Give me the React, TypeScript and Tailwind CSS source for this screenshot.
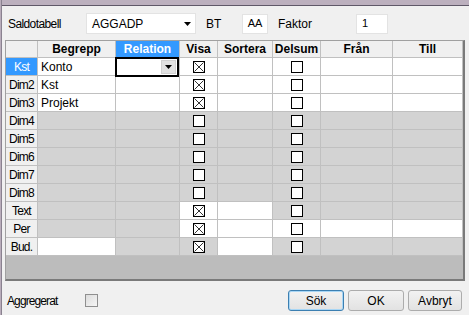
import React from "react";

type Cell = { bg: "w" | "g"; text?: string; check?: "x" | "o"; editor?: boolean };

const W: Cell = { bg: "w" };
const G: Cell = { bg: "g" };
const XW: Cell = { bg: "w", check: "x" };
const XG: Cell = { bg: "g", check: "x" };
const OW: Cell = { bg: "w", check: "o" };
const OG: Cell = { bg: "g", check: "o" };

const rows: { head: string; sel?: boolean; cells: Cell[] }[] = [
  { head: "Kst", sel: true, cells: [{ bg: "w", text: "Konto" }, { bg: "w", editor: true }, XW, W, OW, W, W] },
  { head: "Dim2", cells: [{ bg: "w", text: "Kst" }, W, XW, W, OW, W, W] },
  { head: "Dim3", cells: [{ bg: "w", text: "Projekt" }, W, XW, W, OW, W, W] },
  { head: "Dim4", cells: [G, G, OG, G, OG, G, G] },
  { head: "Dim5", cells: [G, G, OG, G, OG, G, G] },
  { head: "Dim6", cells: [G, G, OG, G, OG, G, G] },
  { head: "Dim7", cells: [G, G, OG, G, OG, G, G] },
  { head: "Dim8", cells: [G, G, OG, G, OG, G, G] },
  { head: "Text", cells: [G, G, XW, W, OG, G, G] },
  { head: "Per", cells: [G, G, XW, W, OW, W, W] },
  { head: "Bud.", cells: [W, G, XG, W, OG, G, G] },
];

const headers = ["Begrepp", "Relation", "Visa", "Sortera", "Delsum", "Från", "Till"];
const widths = ["w-[78px]", "w-[64px]", "w-[38px]", "w-[55px]", "w-[48px]", "w-[72px]", "w-[70px]"];

function Box({ checked }: { checked: boolean }) {
  return (
    <svg width="12" height="12" viewBox="0 0 12 12" className="block">
      <rect x="0.5" y="0.5" width="11" height="11" fill="#ffffff" stroke="#000000" strokeWidth="1" />
      {checked && (
        <g stroke="#000000" strokeWidth="0.8">
          <line x1="1.5" y1="1.5" x2="10.5" y2="10.5" />
          <line x1="10.5" y1="1.5" x2="1.5" y2="10.5" />
        </g>
      )}
    </svg>
  );
}

function Arrow() {
  return (
    <svg width="7" height="4" viewBox="0 0 7 4" className="block">
      <polygon points="0,0 7,0 3.5,4" fill="#000000" />
    </svg>
  );
}

export default function App() {
  const font = { fontFamily: '"Liberation Sans", Arial, sans-serif' };
  return (
    <div className="relative w-[469px] h-[315px] overflow-hidden bg-[#f0f0f0] text-black" style={font}>
      {/* window chrome */}
      <div className="h-[6px] bg-[#bcb0be] border-b border-[#5f5868]" />
      <div className="absolute left-0 top-0 bottom-0 w-[2px] bg-[#b9adbb] border-r border-[#8a8290]" />

      <div className="pl-[8px]">
        {/* top row */}
        <div className="flex items-center h-[21px] mt-[7px] text-[12px]">
          <span className="w-[78px] tracking-[-0.6px]">Saldotabell</span>
          <div className="flex items-center w-[110px] h-[21px] bg-white border border-[#e3e3e3] pl-[5px] pr-[4px]">
            <span className="flex-1">AGGADP</span>
            <Arrow />
          </div>
          <span className="ml-[10px] w-[36px]">BT</span>
          <div className="w-[26px] h-[20px] bg-white border border-[#e3e3e3] flex items-center justify-center text-[11px]">AA</div>
          <span className="ml-[10px] w-[78px]">Faktor</span>
          <div className="w-[32px] h-[20px] bg-white border border-[#e3e3e3] flex items-center pl-[5px] text-[11px]">1</div>
        </div>
      </div>

      {/* grid */}
      <div className="ml-[5px] mt-[6px] w-[460px] border-l border-t border-[#a0a0a0] border-r-2 border-b-2 border-r-[#7a7a7a] border-b-[#7a7a7a] bg-[#bcbcbc]">
        {/* header row */}
        <div className="flex h-[17px]">
          <div className="w-[32px] bg-[#f0f0f0] border-r border-b border-[#c0c0c0]" />
          {headers.map((h, i) => (
            <div
              key={h}
              className={`${widths[i]} flex items-center justify-center border-r border-b border-[#c0c0c0] text-[12px] font-bold ${
                h === "Relation" ? "bg-[#3399ff] text-white" : "bg-[#f0f0f0]"
              }`}
            >
              {h}
            </div>
          ))}
        </div>
        {rows.map((r) => (
          <div key={r.head} className="flex h-[18px]">
            <div
              className={`w-[32px] flex items-center justify-center border-r border-b border-[#c0c0c0] text-[12px] tracking-[-0.8px] ${
                r.sel ? "bg-[#3399ff] text-white" : "bg-[#f0f0f0]"
              }`}
            >
              {r.head}
            </div>
            {r.cells.map((c, i) => (
              <div
                key={i}
                className={`${widths[i]} relative flex items-center border-r border-b border-[#c0c0c0] ${
                  c.bg === "w" ? "bg-white" : "bg-[#d3d3d3]"
                } ${c.check ? "justify-center" : "pl-[3px]"} text-[12px]`}
              >
                {c.text}
                {c.check && <Box checked={c.check === "x"} />}
                {c.editor && (
                  <div className="absolute left-[-1px] top-[-1px] w-[64px] h-[20px] border-2 border-black bg-white flex justify-end items-stretch p-[1px] z-10">
                    <div className="w-[15px] bg-[#e1e1e1] border border-[#d0d0d0] flex items-center justify-center">
                      <Arrow />
                    </div>
                  </div>
                )}
              </div>
            ))}
          </div>
        ))}
        <div className="h-[23px]" />
      </div>

      {/* bottom row */}
      <div className="flex items-center mt-[9px] pl-[7px] pr-[7px]">
        <span className="w-[78px] text-[12px] tracking-[-0.9px]">Aggregerat</span>
        <div className="w-[13px] h-[13px] border border-[#8f8f8f] bg-gradient-to-br from-[#dcdcdc] to-[#f6f6f6]" />
        <div className="flex-1" />
        <button className="w-[56px] h-[21px] rounded-[3px] border border-[#3c7fb1] bg-gradient-to-b from-[#f2f2f2] to-[#e2e2e2] text-[12px] shadow-[inset_0_0_0_1px_#a8d6f5]">
          Sök
        </button>
        <button className="ml-[4px] w-[56px] h-[21px] rounded-[3px] border border-[#acacac] bg-gradient-to-b from-[#f2f2f2] to-[#e2e2e2] text-[12px]">
          OK
        </button>
        <button className="ml-[4px] w-[54px] h-[21px] rounded-[3px] border border-[#acacac] bg-gradient-to-b from-[#f2f2f2] to-[#e2e2e2] text-[12px]">
          Avbryt
        </button>
      </div>
    </div>
  );
}
